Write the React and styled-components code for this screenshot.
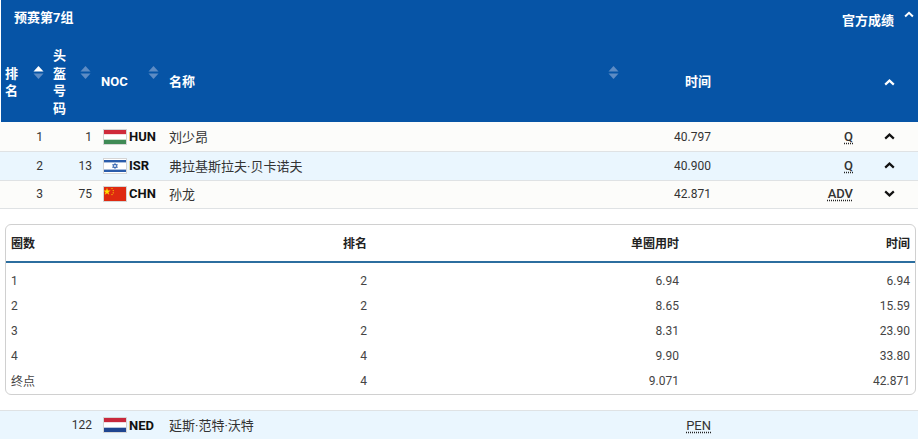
import React from "react";
import styled, { createGlobalStyle } from "styled-components";

const Global = createGlobalStyle`
  html, body { margin: 0; padding: 0; background: #fff; }
  body { font-family: Roboto, "Noto Sans CJK SC", sans-serif; font-size: 12px; color: #333; width: 918px; height: 439px; overflow: hidden; }
`;

const COLS = "45px 47px 68px 459px 91px 142px 64px";
const LAP_COLS = "1fr 300px 312px 231px";

const Page = styled.div`
  margin-left: 1px;
  width: 917px;
`;
const Banner = styled.header`
  background: #0654a6;
  color: #fff;
  height: 122px;
  display: flex;
  flex-direction: column;
`;
const TitleBar = styled.div`
  height: 40px;
  display: flex;
  align-items: flex-start;
  font-weight: 700;
`;
const GroupTitle = styled.div`
  margin: 9px 0 0 13px;
  font-size: 13px;
  line-height: 17px;
`;
const OfficialLink = styled.div`
  margin: 12px 0 0 auto;
  font-size: 13px;
  line-height: 17px;
`;
const TopChevron = styled.span`
  margin: 11px 4px 0 10px;
  width: 10px;
  display: block;
`;
const HeadRow = styled.div`
  flex: 1;
  display: grid;
  grid-template-columns: ${COLS};
  font-weight: 700;
  align-items: center;
  padding-top: 2px;
`;
const HeadCell = styled.div`
  display: flex;
  align-items: center;
  justify-content: ${p => (p.$right ? "flex-end" : "space-between")};
  padding: ${p => p.$pad || "0"};
  font-size: 13px;
  line-height: 18px;
`;
const Stack = styled.span`
  width: 13px;
  display: block;
  line-height: 17.5px;
  word-break: break-all;
`;
const SortIcon = styled.svg`
  width: 11px;
  height: 15px;
  display: block;
  flex: none;
  margin-bottom: 19px;
`;
const Row = styled.div`
  display: grid;
  grid-template-columns: ${COLS};
  align-items: center;
  height: ${p => p.$h || 29}px;
  box-sizing: border-box;
  margin-left: -1px;
  padding-left: 1px;
  padding-bottom: ${p => p.$pb || 0}px;
  width: 918px;
  background: ${p => (p.$alt ? "#eaf6fe" : "#fcfcfa")};
  border-bottom: 1px solid #dfe2e4;
  border-top: ${p => (p.$top ? "1px solid #dfe2e4" : "none")};
  color: #333;
`;
const Num = styled.div`
  text-align: right;
  padding-right: ${p => p.$pr || 0}px;
  font-size: 12px;
`;
const Noc = styled.div`
  display: flex;
  align-items: center;
  padding-left: 10px;
  gap: 2px;
  font-weight: 700;
  font-size: 13px;
  color: #111;
`;
const Flag = styled.svg`
  width: 24px;
  height: 16px;
  display: block;
  flex: none;
  outline: 1px solid #d5d5d5;
  outline-offset: -1px;
`;
const Name = styled.div`
  padding-left: 8px;
  padding-bottom: 1px;
  font-size: 13px;
  color: #333;
`;
const Time = styled.div`
  text-align: right;
  font-size: 12px;
`;
const Res = styled.div`
  text-align: right;
  font-size: 13px;
  font-weight: 500;
`;
const Abbr = styled.abbr`
  text-decoration: underline dotted #222;
  text-underline-offset: 2px;
  font-size: 13px;
`;
const Chev = styled.div`
  display: flex;
  justify-content: center;
  padding-left: 8px;
`;
const ChevSvg = styled.svg`
  width: ${p => p.$w || 11}px;
  height: 7px;
  display: block;
`;
const Panel = styled.section`
  margin: 15px 2px 15px 4px;
  height: 171px;
  box-sizing: border-box;
  width: 911px;
  border: 1px solid #d0d0d0;
  border-radius: 6px;
  background: #fff;
`;
const PanelHead = styled.div`
  display: grid;
  grid-template-columns: ${LAP_COLS};
  height: 38px;
  box-sizing: border-box;
  padding: 0 5px 2px;
  align-items: center;
  border-bottom: 2px solid #2c6e9f;
  font-weight: 700;
  color: #222;
  font-size: 12px;
`;
const PanelBody = styled.div`
  padding-top: 5px;
`;
const PanelRow = styled.div`
  display: grid;
  grid-template-columns: ${LAP_COLS};
  height: 25px;
  align-items: center;
  font-size: 12px;
  color: #444;
  padding: 0 5px;
`;
const Cell = styled.div`
  text-align: ${p => (p.$left ? "left" : "right")};
`;

const Sort = ({ up }) => (
  <SortIcon viewBox="0 0 11 15">
    <path d="M5.5 1 L10.5 6.5 H0.5 Z" fill={up ? "#fff" : "#5d8cc4"} />
    <path d="M5.5 14 L10.5 8.5 H0.5 Z" fill="#5d8cc4" />
  </SortIcon>
);
const Chevron = ({ down, color = "#111", w }) => (
  <ChevSvg viewBox="0 0 11 7" $w={w}>
    <path d={down ? "M1.2 1.4 L5.5 5.4 L9.8 1.4" : "M1.2 5.6 L5.5 1.6 L9.8 5.6"} fill="none" stroke={color} strokeWidth="2.2" />
  </ChevSvg>
);

const Hun = () => (
  <Flag viewBox="0 0 24 16">
    <rect width="24" height="5.4" fill="#cf2a3b" />
    <rect y="5.4" width="24" height="5.3" fill="#fff" />
    <rect y="10.7" width="24" height="5.3" fill="#3f8a55" />
  </Flag>
);
const Isr = () => (
  <Flag viewBox="0 0 24 16">
    <rect width="24" height="16" fill="#fff" />
    <rect y="2" width="24" height="2.4" fill="#2a5cab" />
    <rect y="11.6" width="24" height="2.4" fill="#2a5cab" />
    <path d="M12 5.4 L14.4 9.4 H9.6 Z M12 10.6 L9.6 6.6 H14.4 Z" fill="none" stroke="#2a5cab" strokeWidth="0.8" />
  </Flag>
);
const Chn = () => (
  <Flag viewBox="0 0 24 16">
    <rect width="24" height="16" fill="#de2910" />
    <path d="M4 1.8 L4.9 4.6 L7.6 4.6 L5.4 6.2 L6.2 8.8 L4 7.2 L1.8 8.8 L2.6 6.2 L0.4 4.6 L3.1 4.6 Z" fill="#ffde00" />
    <circle cx="9" cy="2.5" r="0.6" fill="#ffde00" />
    <circle cx="10.2" cy="4.6" r="0.6" fill="#ffde00" />
    <circle cx="10.2" cy="6.8" r="0.6" fill="#ffde00" />
    <circle cx="9" cy="8.6" r="0.6" fill="#ffde00" />
  </Flag>
);
const Ned = () => (
  <Flag viewBox="0 0 24 16">
    <rect width="24" height="5.4" fill="#c8283c" />
    <rect y="5.4" width="24" height="5.3" fill="#fff" />
    <rect y="10.7" width="24" height="5.3" fill="#1f4590" />
  </Flag>
);

const athletes = [
  { rank: "1", bib: "1", flag: <Hun />, noc: "HUN", name: "刘少昂", time: "40.797", res: "Q" },
  { rank: "2", bib: "13", flag: <Isr />, noc: "ISR", name: "弗拉基斯拉夫·贝卡诺夫", time: "40.900", res: "Q", alt: true },
  { rank: "3", bib: "75", flag: <Chn />, noc: "CHN", name: "孙龙", time: "42.871", res: "ADV", down: true },
];
const laps = [
  ["1", "2", "6.94", "6.94"],
  ["2", "2", "8.65", "15.59"],
  ["3", "2", "8.31", "23.90"],
  ["4", "4", "9.90", "33.80"],
  ["终点", "4", "9.071", "42.871"],
];

const AthleteRow = ({ a, h, top, pb }) => (
  <Row $alt={a.alt} $h={h} $top={top} $pb={pb}>
    <Num $pr={3}>{a.rank}</Num>
    <Num $pr={1}>{a.bib}</Num>
    <Noc>{a.flag}{a.noc}</Noc>
    <Name>{a.name}</Name>
    <Time>{a.time}</Time>
    <Res>{a.res && <Abbr>{a.res}</Abbr>}</Res>
    <Chev>{a.chev !== false && <Chevron down={a.down} />}</Chev>
  </Row>
);

export default function App() {
  return (
    <Page>
      <Global />
      <Banner>
        <TitleBar>
          <GroupTitle>预赛第7组</GroupTitle>
          <OfficialLink>官方成绩</OfficialLink>
          <TopChevron><Chevron color="#fff" w={10} /></TopChevron>
        </TitleBar>
        <HeadRow>
          <HeadCell $pad="0 2px 0 4px"><Stack>排名</Stack><Sort up /></HeadCell>
          <HeadCell $pad="0 2px 0 7px"><Stack>头盔号码</Stack><Sort /></HeadCell>
          <HeadCell $pad="0 2px 0 8px">NOC<Sort /></HeadCell>
          <HeadCell $pad="0 1px 0 8px">名称<Sort /></HeadCell>
          <HeadCell $right>时间</HeadCell>
          <div />
          <Chev><Chevron color="#fff" /></Chev>
        </HeadRow>
      </Banner>
      <AthleteRow a={athletes[0]} h={30} />
      <AthleteRow a={athletes[1]} pb={1} />
      <AthleteRow a={athletes[2]} h={28} pb={2} />
      <Panel>
        <PanelHead>
          <Cell $left>圈数</Cell>
          <Cell>排名</Cell>
          <Cell>单圈用时</Cell>
          <Cell>时间</Cell>
        </PanelHead>
        <PanelBody>
          {laps.map(l => (
            <PanelRow key={l[0]}>
              <Cell $left>{l[0]}</Cell>
              <Cell>{l[1]}</Cell>
              <Cell>{l[2]}</Cell>
              <Cell>{l[3]}</Cell>
            </PanelRow>
          ))}
        </PanelBody>
      </Panel>
      <AthleteRow top a={{ rank: "", bib: "122", flag: <Ned />, noc: "NED", name: "延斯·范特·沃特", time: <Abbr>PEN</Abbr>, res: "", chev: false, alt: true }} h={30} />
    </Page>
  );
}
